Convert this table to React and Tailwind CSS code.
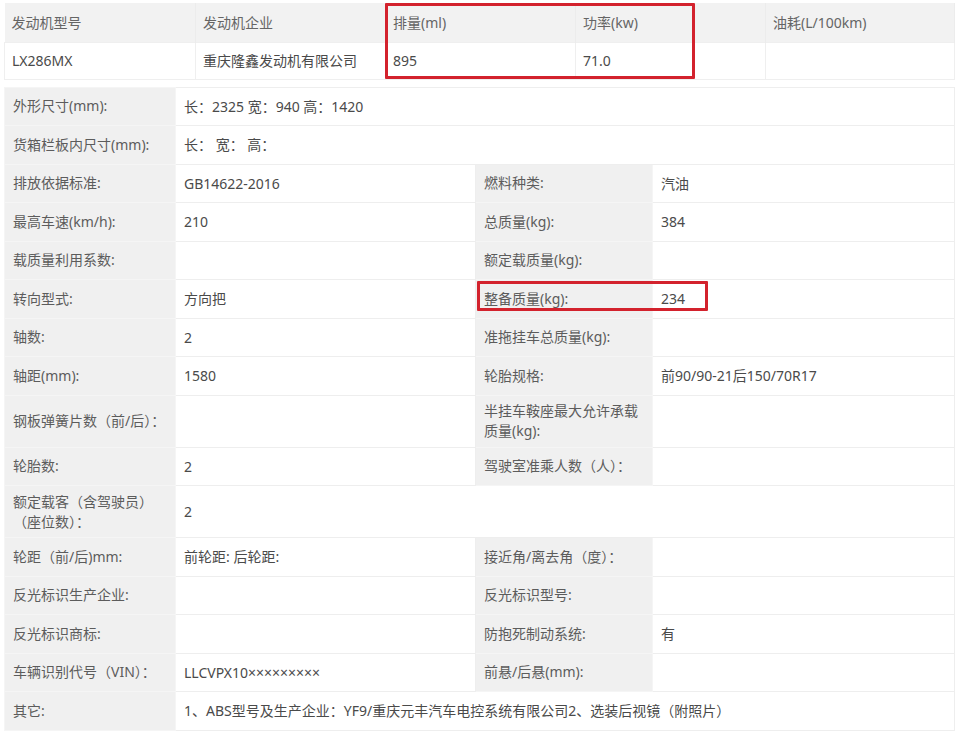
import React from "react";

const engineHead = ["发动机型号", "发动机企业", "排量(ml)", "功率(kw)", "油耗(L/100km)"];
const engineRow = ["LX286MX", "重庆隆鑫发动机有限公司", "895", "71.0", ""];

// [label, value, label2, value2, tall]
const specs = [
  ["外形尺寸(mm):", "长：2325 宽：940 高：1420"],
  ["货箱栏板内尺寸(mm):", "长：  宽：  高："],
  ["排放依据标准:", "GB14622-2016", "燃料种类:", "汽油"],
  ["最高车速(km/h):", "210", "总质量(kg):", "384"],
  ["载质量利用系数:", "", "额定载质量(kg):", ""],
  ["转向型式:", "方向把", "整备质量(kg):", "234"],
  ["轴数:", "2", "准拖挂车总质量(kg):", ""],
  ["轴距(mm):", "1580", "轮胎规格:", "前90/90-21后150/70R17"],
  ["钢板弹簧片数（前/后）：", "", "半挂车鞍座最大允许承载质量(kg):", "", true],
  ["轮胎数:", "2", "驾驶室准乘人数（人）：", ""],
  ["额定载客（含驾驶员）（座位数）：", "2", null, null, true],
  ["轮距（前/后)mm:", "前轮距: 后轮距:", "接近角/离去角（度）：", ""],
  ["反光标识生产企业:", "", "反光标识型号:", ""],
  ["反光标识商标:", "", "防抱死制动系统:", "有"],
  ["车辆识别代号（VIN）：", "LLCVPX10×××××××××", "前悬/后悬(mm):", ""],
  ["其它:", "1、ABS型号及生产企业：YF9/重庆元丰汽车电控系统有限公司2、选装后视镜（附照片）"],
];

const labelCls =
  "bg-[#f0f0f0] border border-[#f5f5f5] pl-[8px] pr-2 text-[#5c5c5c] leading-[20px] align-middle";
const valueCls = "border border-[#eeeeee] pl-[8px] text-[#4a4a4a] align-middle";

const SpecRow = ({ row }) => {
  const [label, value, label2, value2, tall] = row;
  const h = tall ? "h-[52px]" : "h-[38.5px]";
  const single = label2 === undefined || label2 === null;
  return (
    <tr className={h}>
      <td className={labelCls}>{label}</td>
      {single ? (
        <td colSpan={3} className={valueCls}>
          {value}
        </td>
      ) : (
        <>
          <td className={valueCls}>{value}</td>
          <td className={labelCls}>{label2}</td>
          <td className={valueCls}>{value2}</td>
        </>
      )}
    </tr>
  );
};

export default function App() {
  return (
    <div
      className="relative w-[960px] h-[732px] bg-white overflow-hidden text-[14px]"
      style={{ fontFamily: '"Noto Sans", "Noto Sans CJK SC", sans-serif' }}
    >
      <div className="pl-[4px] pt-[3px] w-[955px]">
        <table className="w-full table-fixed border-collapse">
          <colgroup>
            <col className="w-[191px]" />
            <col className="w-[190px]" />
            <col className="w-[190px]" />
            <col className="w-[190px]" />
            <col />
          </colgroup>
          <tbody>
            <tr className="h-[39px] bg-[#f2f2f2]">
              {engineHead.map((t) => (
                <td key={t} className="border-r border-[#ececec] pl-[7px] text-[#656565] align-middle">
                  {t}
                </td>
              ))}
            </tr>
            <tr className="h-[37px]">
              {engineRow.map((t, i) => (
                <td key={i} className="border border-[#efefef] pl-[7px] text-[#4a4a4a] align-middle">
                  {t}
                </td>
              ))}
            </tr>
          </tbody>
        </table>

        <table className="mt-[7px] w-full table-fixed border-collapse">
          <colgroup>
            <col className="w-[171px]" />
            <col className="w-[300px]" />
            <col className="w-[177px]" />
            <col />
          </colgroup>
          <tbody>
            {specs.map((r, i) => (
              <SpecRow key={i} row={r} />
            ))}
          </tbody>
        </table>
      </div>

      <div className="absolute left-[385px] top-[3px] w-[310px] h-[76px] border-[3px] border-[#d3222d] rounded-[1px]" />
      <div className="absolute left-[477px] top-[281px] w-[231px] h-[30px] border-[3px] border-[#d3222d] rounded-[1px]" />
    </div>
  );
}
